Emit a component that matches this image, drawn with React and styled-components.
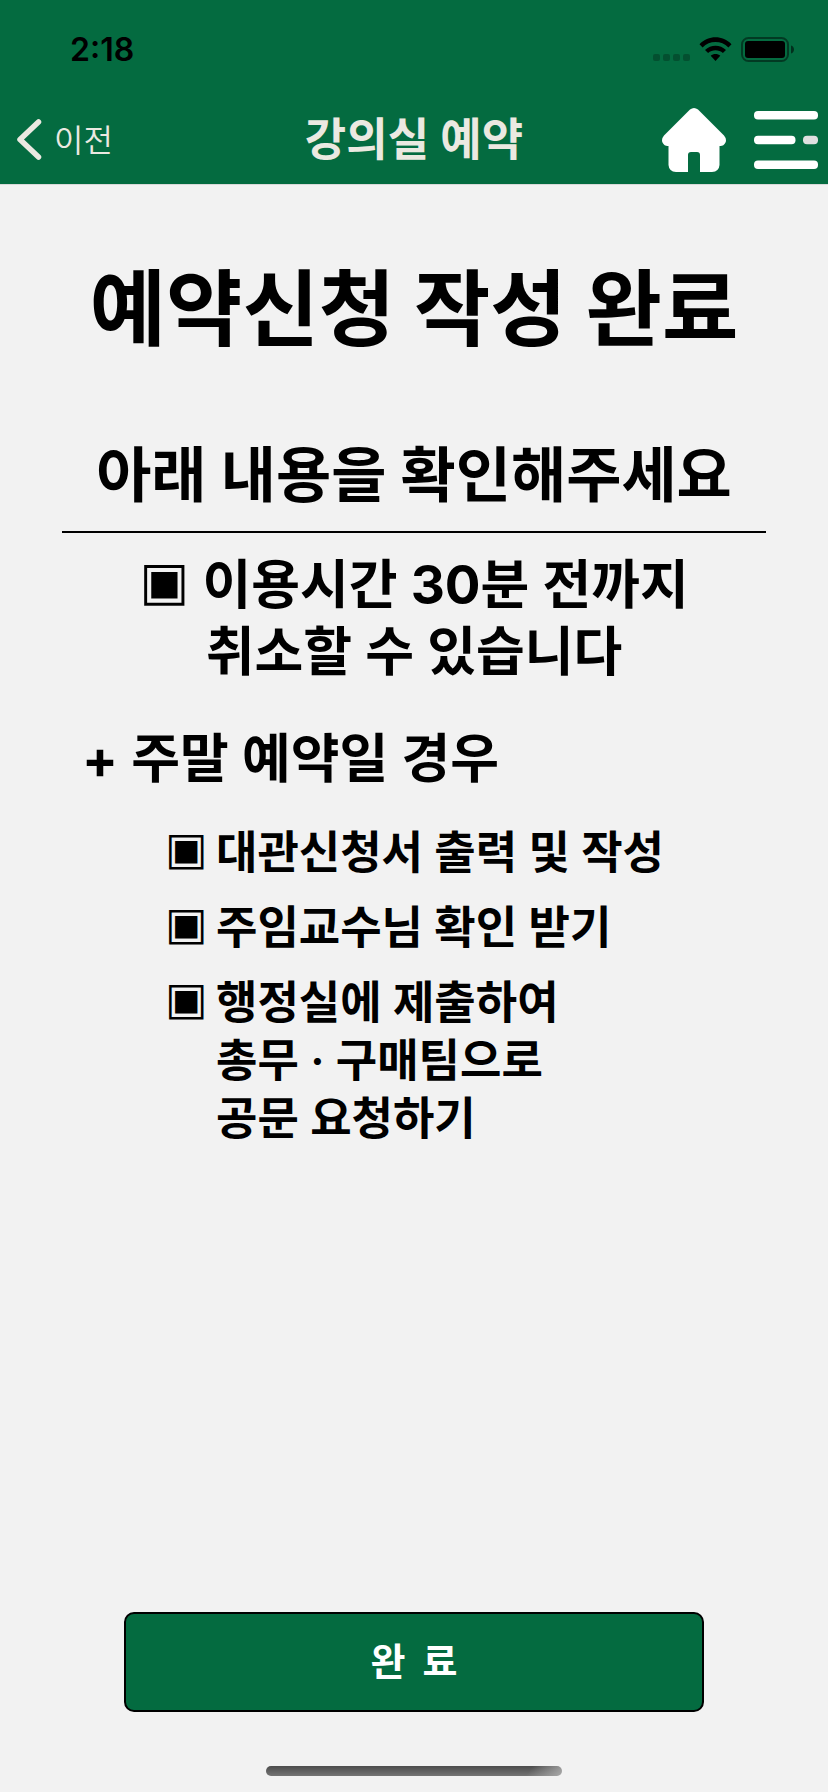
import React from "react";
import styled, { createGlobalStyle } from "styled-components";

const green = "#046b40";
const cream = "#ebe9e1";
const hangulFirst = `"Noto Sans CJK KR", sans-serif`;
const textFont = `Lato, "Noto Sans CJK KR", sans-serif`;

const GlobalStyle = createGlobalStyle`
  * { box-sizing: border-box; }
  body {
    margin: 0;
    background: #f2f2f2;
    color: #000;
    font-family: Inter, "Noto Sans CJK KR", sans-serif;
  }
  h1, h2, h3, p, ul { margin: 0; padding: 0; }
`;

const Screen = styled.div`
  min-height: 100vh;
  display: flex;
  flex-direction: column;
`;

const Header = styled.header`
  background: ${green};
  border-bottom: 1px solid #d9d9d9;
`;

const StatusBar = styled.div`
  height: 96px;
  padding: 2px 34px 0 70px;
  display: flex;
  align-items: center;
  justify-content: space-between;
`;

const Clock = styled.time`
  font-size: 32px;
  font-weight: 600;
`;

const NavBar = styled.nav`
  height: 88px;
  padding: 0 10px;
  display: grid;
  grid-template-columns: 1fr auto 1fr;
  align-items: center;
`;

const BackButton = styled.button`
  justify-self: start;
  display: flex;
  align-items: center;
  gap: 12px;
  padding: 0 0 0 6px;
  border: 0;
  background: none;
  color: ${cream};
  font-family: ${hangulFirst};
  font-size: 32px;
  font-weight: 350;
  line-height: 40px;
`;

const BackLabel = styled.span`
  padding-bottom: 4px;
`;

const NavTitle = styled.h1`
  color: ${cream};
  font-size: 45px;
  font-weight: 600;
  line-height: 56px;
`;

const NavActions = styled.div`
  justify-self: end;
  display: flex;
  gap: 28px;
`;

const IconButton = styled.button`
  display: flex;
  padding: 0;
  border: 0;
  background: none;
`;

const Content = styled.main`
  flex: 1;
  display: flex;
  flex-direction: column;
`;

const PageTitle = styled.h2`
  margin-top: 58px;
  text-align: center;
  font-family: ${hangulFirst};
  font-size: 83px;
  font-weight: 700;
  line-height: 120px;
`;

const Prompt = styled.h3`
  width: 85%;
  margin: 67px auto 0;
  padding-bottom: 11px;
  border-bottom: 2px solid #000;
  text-align: center;
  font-size: 60px;
  font-weight: 700;
  line-height: 90px;
  white-space: nowrap;
`;

const Notice = styled.p`
  margin-top: 17px;
  text-align: center;
  font-family: ${textFont};
  font-size: 53px;
  font-weight: 600;
  line-height: 67px;
`;

const CaseTitle = styled.h3`
  margin: 40px 0 0 82px;
  font-family: ${textFont};
  font-size: 53px;
  font-weight: 600;
  line-height: 67px;
`;

const Latin = styled.span`
  font-family: Inter, sans-serif;
  font-weight: 700;
  line-height: 1;
`;

const Square = styled.span`
  font-family: "DejaVu Sans", sans-serif;
  font-weight: 400;
  line-height: 1;
  vertical-align: 5px;
`;

const Steps = styled.ul`
  margin: 33px 0 0 165px;
  display: flex;
  flex-direction: column;
  gap: 17px;
  list-style: none;
  font-size: 45px;
  font-weight: 600;
  line-height: 58px;
`;

const Step = styled.li`
  display: flex;
`;

const Marker = styled.span`
  width: 51px;
`;

const Footer = styled.footer`
  display: flex;
  flex-direction: column;
  align-items: center;
  padding-bottom: 16px;
`;

const DoneButton = styled.button`
  width: 70%;
  height: 100px;
  padding: 0 0 8px;
  border: 2px solid #000;
  border-radius: 10px;
  background: ${green};
  color: #fff;
  font-family: ${hangulFirst};
  font-size: 38px;
  font-weight: 600;
  white-space: pre;
`;

const HomeIndicator = styled.div`
  width: 296px;
  height: 10px;
  margin-top: 54px;
  border-radius: 5px;
  background:
    linear-gradient(125deg, transparent 88%, #a8a8a8 100%),
    linear-gradient(#4c4c4c, #747474);
`;

function StatusIcons() {
  return (
    <svg width="141" height="26" viewBox="0 0 141 26" aria-hidden="true">
      <g fill="#000" fillOpacity="0.25">
        <rect x="0" y="18" width="7" height="7" rx="2" />
        <rect x="10" y="18" width="7" height="7" rx="2" />
        <rect x="20" y="18" width="7" height="7" rx="2" />
        <rect x="30" y="18" width="7" height="7" rx="2" />
      </g>
      <path d="M46.5 8.3C55.2-1 69.800-1 78.500 8.300L75.400 11.400C68.500 4.200 56.500 4.200 49.600 11.400Z" />
      <path d="M52 14C57.800 8.300 67.200 8.300 73 14L69.900 17.100C65.900 13.400 59.100 13.400 55.100 17.100Z" />
      <path d="M57.700 19.800C60.300 17.500 64.700 17.500 67.300 19.800L62.500 25Z" />
      <rect x="89" y="2" width="46" height="23" rx="6.500" fill="none" stroke="#000" strokeOpacity="0.45" strokeWidth="2" />
      <rect x="92" y="5" width="40" height="17" rx="3" />
      <path d="M138 9.500C140 10 141 11.800 141 13.500S140 17 138 17.500Z" fillOpacity="0.55" />
    </svg>
  );
}

function ChevronIcon() {
  return (
    <svg width="26" height="42" viewBox="0 0 26 42" fill="none" stroke={cream} strokeWidth="5.500" strokeLinecap="round" aria-hidden="true">
      <path d="M22.500 3L4 20.500L22.500 38" strokeLinejoin="round" />
    </svg>
  );
}

function HomeIcon() {
  return (
    <svg width="64" height="64" viewBox="0 0 64 64" fill="#fff" aria-hidden="true">
      <path d="M28 1.500Q32-1.500 36 1.500L62 27.500Q65 31 63.500 34.500Q61.500 38.500 57.500 38V57Q57 63.500 50 64H38V47Q38 44 35 44H29Q26 44 26 47V64H14Q7 63.500 6.500 57V38Q2.500 38.500.5 34.500Q-1 31 2 27.500Z" />
    </svg>
  );
}

function MenuIcon() {
  return (
    <svg width="64" height="64" viewBox="0 0 64 64" fill="#fff" aria-hidden="true">
      <rect x="0" y="3" width="64" height="8.500" rx="4" />
      <rect x="0" y="27.800" width="41.500" height="8.500" rx="4" />
      <rect x="49" y="27.800" width="15" height="8.500" rx="4" fill="#e0e0e0" />
      <rect x="0" y="52.500" width="64" height="8.500" rx="4" />
    </svg>
  );
}

const steps = [
  ["대관신청서 출력 및 작성"],
  ["주임교수님 확인 받기"],
  ["행정실에 제출하여", "총무 · 구매팀으로", "공문 요청하기"],
];

export default function App() {
  return (
    <Screen>
      <GlobalStyle />
      <Header>
        <StatusBar>
          <Clock>2:18</Clock>
          <StatusIcons />
        </StatusBar>
        <NavBar>
          <BackButton type="button">
            <ChevronIcon />
            <BackLabel>이전</BackLabel>
          </BackButton>
          <NavTitle>강의실 예약</NavTitle>
          <NavActions>
            <IconButton type="button" aria-label="홈">
              <HomeIcon />
            </IconButton>
            <IconButton type="button" aria-label="메뉴">
              <MenuIcon />
            </IconButton>
          </NavActions>
        </NavBar>
      </Header>
      <Content>
        <PageTitle>예약신청 작성 완료</PageTitle>
        <Prompt>아래 내용을 확인해주세요</Prompt>
        <Notice>
          <Square>▣</Square> 이용시간 <Latin>30</Latin>분 전까지
          <br />
          취소할 수 있습니다
        </Notice>
        <CaseTitle>
          <Latin>+</Latin> 주말 예약일 경우
        </CaseTitle>
        <Steps>
          {steps.map((lines) => (
            <Step key={lines[0]}>
              <Marker>
                <Square>▣</Square>
              </Marker>
              <div>
                {lines.map((line) => (
                  <div key={line}>{line}</div>
                ))}
              </div>
            </Step>
          ))}
        </Steps>
      </Content>
      <Footer>
        <DoneButton type="button">{"완  료"}</DoneButton>
        <HomeIndicator />
      </Footer>
    </Screen>
  );
}
